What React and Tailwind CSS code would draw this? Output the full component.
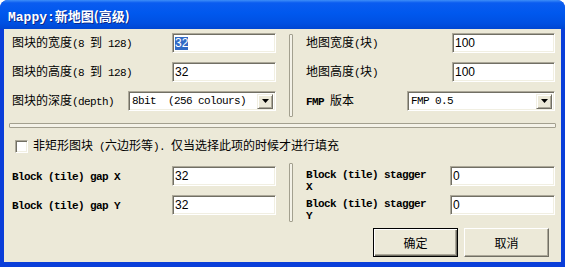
import React from 'react';

const cjk = "font-['Noto_Sans_CJK_SC',sans-serif]";
const mono = "font-['Liberation_Mono',monospace] text-[11px] tracking-[-0.6px] whitespace-pre";

// ascii runs are drawn in a narrow mono face, CJK at 12px, like the old bitmap dialog font
function Mixed({ text, bold }) {
  const parts = text.split(/([\x00-\x7f]+)/).filter(Boolean);
  return parts.map((p, i) =>
    /^[\x00-\x7f]+$/.test(p) ? (
      <span key={i} className={`${mono} ${bold ? 'font-bold' : ''}`}>
        {p}
      </span>
    ) : (
      <span key={i}>{p}</span>
    )
  );
}

const sunken =
  'bg-white border border-t-[#aca899] border-l-[#aca899] border-b-white border-r-white shadow-[inset_1px_1px_0_#716f64,inset_-1px_-1px_0_#f1efe2]';

function Field({ value, selected, className }) {
  return (
    <div className={`h-[20px] flex items-center pl-[2px] font-['Liberation_Sans',sans-serif] text-[12px] ${sunken} ${className}`}>
      <span className={selected ? 'bg-[#316ac5] text-white leading-[13px]' : 'text-black leading-[13px]'}>{value}</span>
    </div>
  );
}

function Select({ value, className }) {
  return (
    <div className={`h-[20px] flex items-center justify-between pl-[3px] pr-[2px] ${sunken} ${className}`}>
      <span className={`${mono} text-black`}>{value}</span>
      <div className="w-[16px] h-[15px] bg-[#ece9d8] border border-t-[#f1efe2] border-l-[#f1efe2] border-b-[#716f64] border-r-[#716f64] shadow-[inset_1px_1px_0_#fff,inset_-1px_-1px_0_#aca899] flex items-center justify-center">
        <svg width="7" height="4" viewBox="0 0 7 4"><path d="M0 0h7L3.5 4z" fill="#000" /></svg>
      </div>
    </div>
  );
}

function Label({ text, bold }) {
  return (
    <div className={`flex-1 text-[12px] text-black leading-none ${cjk}`}>
      <Mixed text={text} bold={bold} />
    </div>
  );
}

function Groove({ className }) {
  return <div className={`border border-[#a3a08f] bg-[#f4f2e8] rounded-[1px] ${className}`} />;
}

function Button({ children, primary }) {
  return (
    <div
      className={`w-[85px] h-[29px] flex items-center justify-center text-[12px] text-black bg-[#ece9d8] ${cjk} ${
        primary
          ? 'border border-black shadow-[inset_1px_1px_0_#fff,inset_-1px_-1px_0_#716f64,inset_-2px_-2px_0_#aca899]'
          : 'border border-t-white border-l-white border-b-[#716f64] border-r-[#716f64] shadow-[inset_-1px_-1px_0_#aca899]'
      }`}
    >
      {children}
    </div>
  );
}

export default function App() {
  return (
    <div className="w-[565px] h-[267px] bg-[#0a3ed9] rounded-t-[8px] flex flex-col overflow-hidden">
      {/* title bar */}
      <div className="h-[29px] flex items-center pl-[8px] pt-[4px] bg-[linear-gradient(to_bottom,#3d8ef8_0%,#0a5cf0_10%,#0058ee_45%,#0050e2_80%,#0046d2_100%)]">
        <span className={`text-white font-bold text-[13px] leading-none [text-shadow:1px_1px_0_#0b2a8c] ${cjk}`}>
          <span className="font-['Liberation_Mono',monospace]">Mappy:</span>新地图(高级)
        </span>
      </div>

      {/* body */}
      <div className="flex-1 mx-[4px] mb-[5px] bg-[#ece9d8] flex flex-col pt-[4px]">
        {/* size / depth */}
        <div className="flex">
          <div className="ml-[8px] w-[264px] flex flex-col gap-[9px]">
            <div className="flex items-center">
              <Label text="图块的宽度(8 到 128)" />
              <Field value="32" selected className="w-[104px]" />
            </div>
            <div className="flex items-center">
              <Label text="图块的高度(8 到 128)" />
              <Field value="32" className="w-[104px]" />
            </div>
            <div className="flex items-center">
              <Label text="图块的深度(depth)" />
              <Select value="8bit  (256 colours)" className="w-[148px]" />
            </div>
          </div>
          <Groove className="ml-[13px] mt-[1px] w-[4px] h-[83px]" />
          <div className="ml-[13px] w-[249px] flex flex-col gap-[9px]">
            <div className="flex items-center">
              <Label text="地图宽度(块)" />
              <Field value="100" className="w-[103px]" />
            </div>
            <div className="flex items-center">
              <Label text="地图高度(块)" />
              <Field value="100" className="w-[103px]" />
            </div>
            <div className="flex items-center">
              <Label text="FMP 版本" bold />
              <Select value="FMP 0.5" className="w-[148px]" />
            </div>
          </div>
        </div>

        <Groove className="mt-[6px] mx-[5px] h-[5px]" />

        {/* checkbox */}
        <div className="mt-[11px] ml-[11px] flex items-center gap-[5px]">
          <div className={`w-[13px] h-[13px] ${sunken}`} />
          <div className={`text-[12px] text-black leading-none ${cjk}`}>
            <Mixed text="非矩形图块 (六边形等). 仅当选择此项的时候才进行填充" />
          </div>
        </div>

        {/* gap / stagger */}
        <div className="mt-[10px] flex">
          <div className="ml-[8px] w-[264px] pt-[3px] flex flex-col gap-[9px]">
            <div className="flex items-center">
              <Label text="Block (tile) gap X" bold />
              <Field value="32" className="w-[104px]" />
            </div>
            <div className="flex items-center">
              <Label text="Block (tile) gap Y" bold />
              <Field value="32" className="w-[104px]" />
            </div>
          </div>
          <Groove className="ml-[13px] w-[4px] h-[59px]" />
          <div className="ml-[13px] w-[249px] pt-[3px] flex flex-col gap-[9px]">
            <div className="flex items-start h-[20px]">
              <div className="flex-1 pt-[3px] pr-[20px] font-['Liberation_Mono',monospace] font-bold text-[11px] tracking-[-0.6px] leading-[12px] text-black">
                Block (tile) stagger X
              </div>
              <Field value="0" className="w-[105px]" />
            </div>
            <div className="flex items-start h-[20px]">
              <div className="flex-1 pt-[3px] pr-[20px] font-['Liberation_Mono',monospace] font-bold text-[11px] tracking-[-0.6px] leading-[12px] text-black">
                Block (tile) stagger Y
              </div>
              <Field value="0" className="w-[105px]" />
            </div>
          </div>
        </div>

        {/* buttons */}
        <div className="mt-[6px] pr-[12px] flex justify-end gap-[6px]">
          <Button primary>确定</Button>
          <Button>取消</Button>
        </div>
      </div>
    </div>
  );
}
